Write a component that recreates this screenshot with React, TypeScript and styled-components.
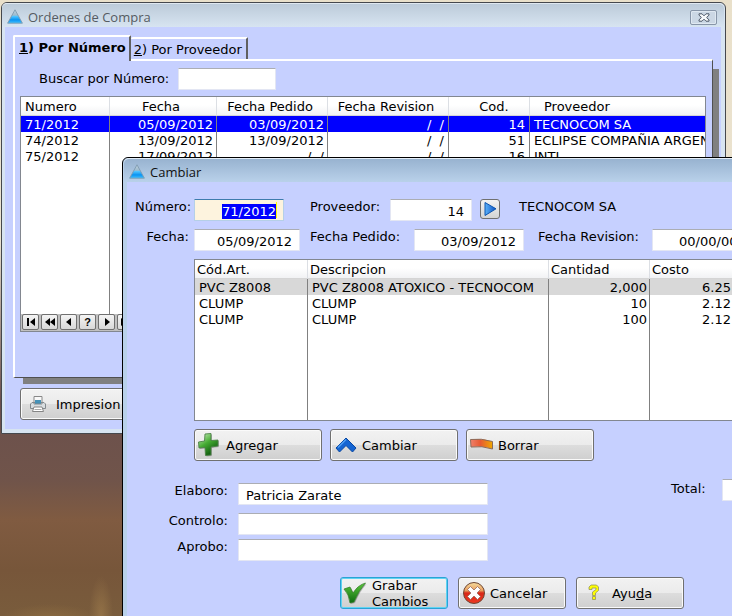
import React, { useEffect, useRef } from "react";
import styled, { createGlobalStyle, css } from "styled-components";

const GlobalStyle = createGlobalStyle`
  *, *::before, *::after { box-sizing: border-box; }
  body {
    margin: 0;
    color: #000;
    font-family: "DejaVu Sans", Verdana, sans-serif;
    font-size: 13px;
    line-height: 16px;
  }
  input, button { font: inherit; color: inherit; }
`;

const Desktop = styled.div`
  position: relative;
  min-height: 100vh;
  overflow: hidden;
  background:
    radial-gradient(ellipse 12px 40px at 101px 616px, #a8845088, transparent),
    radial-gradient(ellipse 50px 16px at 50px 620px, #a07c4477, transparent),
    linear-gradient(#e9e0ca 0, #ebe3d0 240px, #6b504d 400px, #70544a 480px, #805b41 520px, #77563a 570px, #795c3c 616px);
`;

const Window = styled.section<{ $active?: boolean }>`
  position: absolute;
  display: flex;
  flex-direction: column;
  border: 1px solid ${(p) => (p.$active ? "#000" : "#45484d")};
  border-radius: 6px 6px 0 0;
  background: ${(p) => (p.$active ? "#b9d1ea" : "#d7e4f1")};
`;

const OrdersWindow = styled(Window)`
  left: 1px;
  right: 6px;
  top: 2px;
  padding: 0 4px 4px 3px;
`;

const EditWindow = styled(Window)`
  left: 122px;
  right: -60px;
  top: 157px;
  min-height: calc(100vh - 150px);
  padding: 0 4px 4px;
`;

const TitleBar = styled.header<{ $active?: boolean }>`
  display: flex;
  align-items: center;
  gap: 5px;
  height: 24px;
  margin: 0 -3px;
  padding: 3px 7px 0 5px;
  border-top: 1px solid ${(p) => (p.$active ? "#e4eef8" : "#dfe8f0")};
  border-radius: 5px 5px 0 0;
  background: ${(p) =>
    p.$active
      ? "linear-gradient(#98b3d0, #b9d1ea)"
      : "linear-gradient(#bccbd9, #d7e4f1)"};
`;

const Title = styled.h1<{ $active?: boolean }>`
  flex: 1;
  margin: 0;
  font: 400 13px/18px "Open Sans", "Segoe UI", sans-serif;
  color: ${(p) => (p.$active ? "#111" : "#555b62")};
`;

const CloseButton = styled.button`
  display: flex;
  align-items: center;
  justify-content: center;
  width: 27px;
  height: 15px;
  padding: 0;
  border: 1px solid #8795a8;
  border-radius: 2px;
  background: #cbd7e4;
  box-shadow: inset 0 0 0 1px #dfe8f1;
`;

const Client = styled.div`
  flex: 1;
  background: #c6d0ff;
`;

const OrdersClient = styled(Client)`
  padding: 8px 8px 9px;
`;

const EditClient = styled(Client)`
  padding: 17px 0 8px 8px;
`;

const Tabs = styled.div`
  display: flex;
  align-items: flex-end;
`;

const Tab = styled.button<{ $selected?: boolean }>`
  height: 22px;
  padding: 1px 4px 0 3px;
  border: solid #fff;
  border-width: 2px 2px 0 0;
  border-right-color: #606060;
  border-radius: 2px 1px 0 0;
  background: #c6d0ff;
  white-space: nowrap;
  ${(p) =>
    p.$selected &&
    css`
      position: relative;
      z-index: 1;
      height: 26px;
      margin-bottom: -2px;
      padding: 0 3px 2px 4px;
      border-left: 2px solid #fff;
      font-weight: 700;
    `}
`;

const TabPanel = styled.div`
  height: 319px;
  padding: 7px 6px 0 5px;
  border: solid #fff;
  border-width: 2px 1px 1px 2px;
  border-right-color: #505050;
  border-bottom-color: #505050;
  box-shadow: 8px 8px 0 -2px #808080;
`;

const SearchRow = styled.div`
  display: flex;
  align-items: center;
  gap: 9px;
  margin-bottom: 6px;
  padding-left: 19px;
`;

const TextBox = styled.input<{ $w: number; $right?: boolean }>`
  width: ${(p) => p.$w}px;
  height: 22px;
  padding: 2px 7px 0;
  border: 1px solid #e3e6f3;
  border-top-color: #abadb3;
  border-radius: 1px;
  outline: 0;
  background: #fff;
  text-align: ${(p) => (p.$right ? "right" : "left")};
`;

const FocusedBox = styled(TextBox)`
  border-color: #b5cfe7;
  border-top-color: #3d7bad;
  background: linear-gradient(#ff0, #ff0) right 6px center / 1px 16px no-repeat #fdf3de;
  &::selection { background: #00f; color: #fff; }
`;

const GridFrame = styled.div`
  overflow: hidden;
  border: 1px solid #828790;
  background: #fff;
`;

const EditGrid = styled(GridFrame)`
  height: 162px;
  margin: 0 0 8px 59px;
`;

const DataTable = styled.table<{ $height: number }>`
  width: 100%;
  height: ${(p) => p.$height}px;
  table-layout: fixed;
  border-collapse: separate;
  border-spacing: 0;
`;

const Col = styled.col<{ $w?: number }>`
  width: ${(p) => (p.$w ? `${p.$w}px` : "auto")};
`;

const HeadCell = styled.th<{ $align?: string; $inset?: number }>`
  height: 19px;
  padding: 1px ${(p) => (p.$align ? 4 : 0)}px 0 ${(p) => p.$inset ?? 0}px;
  border-right: 1px solid #dcdfe4;
  border-bottom: 1px solid #d5d5d5;
  background: linear-gradient(#fff 45%, #f1f2f4);
  font-weight: 400;
  text-align: ${(p) => p.$align ?? "left"};
  white-space: nowrap;
  &:last-child { border-right: 0; }
`;

const Cell = styled.td<{ $right?: boolean }>`
  height: 16px;
  padding: 2px 2px 0 4px;
  border-right: 1px solid #808080;
  overflow: hidden;
  text-align: ${(p) => (p.$right ? "right" : "left")};
  white-space: pre;
  line-height: 14px;
  &:last-child { border-right: 0; }
`;

const Row = styled.tr<{ $tone?: "blue" | "gray" }>`
  ${(p) => p.$tone === "blue" && "background: #00f; color: #fff;"}
  ${(p) => p.$tone === "gray" && "background: #d8d8d8;"}
`;

const FillerCell = styled(Cell)`
  height: auto;
`;

const Navigator = styled.div`
  display: flex;
  gap: 2px;
  height: 17px;
  padding: 0 1px;
  background: #c0c0c0;
`;

const NavButton = styled.button`
  display: flex;
  align-items: center;
  justify-content: center;
  width: 17px;
  height: 16px;
  padding: 0;
  border: 1px solid #707070;
  border-radius: 2px;
  background: linear-gradient(#f4f4f4, #d8d8d8);
  font: 700 11px/12px "Liberation Sans", Arial, sans-serif;
`;

const PushButton = styled.button<{ $w: number; $default?: boolean; $gap?: number; $inset?: number }>`
  display: flex;
  align-items: center;
  gap: ${(p) => p.$gap ?? 5}px;
  width: ${(p) => p.$w}px;
  height: 32px;
  padding: 0 0 0 ${(p) => p.$inset ?? 2}px;
  border: 1px solid ${(p) => (p.$default ? "#2ba3d4" : "#707070")};
  border-radius: 3px;
  background: linear-gradient(#f2f2f2, #ebebeb 49%, #dddddd 50%, #cfcfcf);
  box-shadow: inset 0 0 0 1px ${(p) => (p.$default ? "#5fd3f3" : "#fafafa")};
  text-align: left;
  line-height: 16px;
  svg { flex: none; }
`;

const Caption = styled.span`
  padding-top: 1px;
`;

const PrintArea = styled.div`
  margin-top: 10px;
  padding-left: 7px;
`;

const FieldRow = styled.div`
  display: flex;
  align-items: flex-start;
  height: 30px;
`;

const Label = styled.label<{ $w?: number; $gap?: number; $right?: boolean }>`
  flex: none;
  width: ${(p) => (p.$w ? `${p.$w}px` : "auto")};
  margin-right: ${(p) => p.$gap ?? 0}px;
  text-align: ${(p) => (p.$right ? "right" : "left")};
  white-space: nowrap;
`;

const Field = styled.div<{ $gap?: number }>`
  display: flex;
  flex: none;
  margin-right: ${(p) => p.$gap ?? 0}px;
`;

const LookupButton = styled.button`
  display: flex;
  align-items: center;
  justify-content: center;
  width: 20px;
  height: 20px;
  margin: 0 19px 0 8px;
  padding: 0;
  border: 1px solid #707070;
  border-radius: 3px;
  background: linear-gradient(#f2f2f2, #d4d4d4);
`;

const ButtonRow = styled.div<{ $gap: number; $inset: number }>`
  display: flex;
  gap: ${(p) => p.$gap}px;
  padding-left: ${(p) => p.$inset}px;
`;

const SignArea = styled.div`
  display: flex;
  align-items: flex-start;
  margin: 18px 0 12px;
`;

const Signatures = styled.div`
  display: grid;
  grid-template-columns: 93px 250px;
  grid-template-rows: 30px 26px 26px;
  column-gap: 10px;
  padding-top: 4px;
  margin-right: 183px;
`;

const TotalLabel = styled(Label)`
  padding-top: 2px;
`;

const LogoIcon = () => (
  <svg width="16" height="16" viewBox="0 0 16 16">
    <defs>
      <linearGradient id="logo" x1="0" y1="0" x2="0" y2="1">
        <stop offset="0" stopColor="#c3d2dd" />
        <stop offset=".4" stopColor="#9fbccf" />
        <stop offset=".5" stopColor="#4cc2ff" />
        <stop offset=".75" stopColor="#0a93f2" />
        <stop offset="1" stopColor="#3fc0ff" />
      </linearGradient>
    </defs>
    <path d="M8 .8 L15.400 14.200 H.6 Z" fill="url(#logo)" stroke="#7f9bb0" strokeWidth=".9" strokeLinejoin="round" />
  </svg>
);

const CloseIcon = () => (
  <svg width="12" height="9" viewBox="0 0 12 9">
    <path d="M1 .8h3l2 2 2-2h3v1.400L8.600 4.500 11 6.800v1.400H8l-2-2-2 2H1V6.800l2.400-2.300L1 2.200z" fill="#f6f8fa" stroke="#4c5768" />
  </svg>
);

const PrinterIcon = () => (
  <svg width="18" height="18" viewBox="0 0 18 18">
    <path d="M5 1.500h8v6H5z" fill="#f8f8f8" stroke="#888" />
    <path d="M6 5h6v4H6z" fill="#4592b8" />
    <path d="M3 7.500 1.500 9v4.500h15V9L15 7.500h-2V9H5V7.500z" fill="#d8dde0" stroke="#83898d" />
    <path d="M5 12h8l1.500 4.500h-11z" fill="#fff" stroke="#858585" />
    <path d="M5.500 14.500h7" stroke="#aaa" />
  </svg>
);

const PlusIcon = () => (
  <svg width="24" height="26" viewBox="0 0 24 26">
    <defs>
      <linearGradient id="plus" x1="0" y1="0" x2=".6" y2="1">
        <stop offset="0" stopColor="#d8f7c8" />
        <stop offset=".5" stopColor="#46ac34" />
        <stop offset="1" stopColor="#0c560c" />
      </linearGradient>
    </defs>
    <path d="M9 3l6-.5 0 7 7-.5v6l-7 1 0 8-5.500.500-.5-8-6 .5-.5-6 6-1z" fill="#777" opacity=".5" />
    <path d="M8 2l6-.5 0 7 7-.5v6l-7 1 0 8-5.500.500-.5-8-6 .5-.5-6 6-1z" fill="url(#plus)" stroke="#4c8047" strokeWidth=".9" />
  </svg>
);

const ChevronIcon = () => (
  <svg width="24" height="18" viewBox="0 0 24 18">
    <path d="M12 2 22 12l-3.500 4-6.500-6.500L5.500 16 2 12z" fill="#1464d2" stroke="#0a47a0" strokeLinejoin="round" />
    <path d="M12 3.500 4 11.500" stroke="#4fa1f6" strokeWidth="1.500" />
  </svg>
);

const MinusIcon = () => (
  <svg width="25" height="14" viewBox="0 0 25 14">
    <defs>
      <linearGradient id="minus">
        <stop offset="0" stopColor="#ef806b" />
        <stop offset=".45" stopColor="#e75a32" />
        <stop offset="1" stopColor="#f0a800" />
      </linearGradient>
    </defs>
    <path d="M1.500 1.500Q12 0 23.500 3.500V11Q13 7.500 2 9z" fill="url(#minus)" stroke="#8c6a58" />
  </svg>
);

const CheckIcon = () => (
  <svg width="24" height="26" viewBox="0 0 24 26">
    <defs>
      <linearGradient id="check" x1="0" y1="0" x2="0" y2="1">
        <stop offset="0" stopColor="#5cc83c" />
        <stop offset="1" stopColor="#0e6a10" />
      </linearGradient>
    </defs>
    <path d="M2 10l6-2 3 6Q16 6 23.500 4 17 11 12 23l-4 1Q7 15 2 10z" fill="#666" opacity=".45" />
    <path d="M1 9l6-2 3 6Q15 5 22.500 3 16 10 11 22l-4 1Q6 14 1 9z" fill="url(#check)" stroke="#2e7a22" strokeWidth=".7" />
  </svg>
);

const CancelIcon = () => (
  <svg width="24" height="24" viewBox="0 0 24 24">
    <defs>
      <linearGradient id="cancel" x1="0" y1="0" x2="0" y2="1">
        <stop offset="0" stopColor="#f6dda0" />
        <stop offset=".38" stopColor="#e9a060" />
        <stop offset=".5" stopColor="#d82718" />
        <stop offset="1" stopColor="#ee3a22" />
      </linearGradient>
    </defs>
    <circle cx="12" cy="12" r="10.500" fill="url(#cancel)" stroke="#6e4634" />
    <path d="M8.500 5.500 12 9l3.500-3.500 3 3L15 12l3.500 3.500-3 3L12 15l-3.500 3.500-3-3L9 12 5.500 8.500z" fill="#fff" stroke="#996a60" strokeWidth=".8" />
  </svg>
);

const HelpIcon = () => (
  <svg width="12" height="18" viewBox="0 0 12 18">
    <path d="M1 5.500V3L3 1h5.500l2 2v3.500L7.500 9v2.500h-3V8L8 5.500V4H4v1.500zM4.500 12.500h3v3h-3z" fill="#ff0" stroke="#96965a" strokeWidth=".8" />
  </svg>
);

const PlayIcon = () => (
  <svg width="16" height="16" viewBox="0 0 16 16">
    <defs>
      <linearGradient id="play">
        <stop offset="0" stopColor="#5cb3fa" />
        <stop offset="1" stopColor="#0a51c4" />
      </linearGradient>
    </defs>
    <path d="M3 1.500 14 7.800 3 14.500z" fill="url(#play)" stroke="#0d55ae" strokeLinejoin="round" />
  </svg>
);

const navShapes: Record<string, string> = {
  Primero: "M1 1h2v8H1zM9 1v8L4 5z",
  "Página anterior": "M5 1v8L0 5zM10 1v8L5 5z",
  Anterior: "M7 1v8L2 5z",
  Buscar: "",
  Siguiente: "M3 1v8l5-4z",
  "Página siguiente": "M0 1v8l5-4zM5 1v8l5-4z",
  Último: "M1 1v8l5-4zM7 1h2v8H7z",
};

const orders = [
  ["71/2012", "05/09/2012", "03/09/2012", "/  /", "14", "TECNOCOM SA"],
  ["74/2012", "13/09/2012", "13/09/2012", "/  /", "51", "ECLIPSE COMPAÑIA ARGENTINA"],
  ["75/2012", "17/09/2012", "/  /", "/  /", "16", "INTI"],
];

const items = [
  ["PVC Z8008", "PVC Z8008 ATOXICO - TECNOCOM", "2,000", "6.25"],
  ["CLUMP", "CLUMP", "10", "2.12"],
  ["CLUMP", "CLUMP", "100", "2.12"],
];

const DateCell = styled(Cell)<{ $blank?: boolean }>`
  padding-right: ${(p) => (p.$blank ? 4 : 3)}px;
`;

const CostCell = styled(Cell)`
  padding-right: 55px;
`;

function Orders() {
  return (
    <OrdersWindow>
      <TitleBar>
        <LogoIcon />
        <Title>Ordenes de Compra</Title>
        <CloseButton aria-label="Cerrar"><CloseIcon /></CloseButton>
      </TitleBar>
      <OrdersClient>
        <Tabs role="tablist">
          <Tab role="tab" aria-selected="true" $selected><u>1</u>) Por Número</Tab>
          <Tab role="tab" aria-selected="false"><u>2</u>) Por Proveedor</Tab>
        </Tabs>
        <TabPanel role="tabpanel">
          <SearchRow>
            <Label htmlFor="search">Buscar por Número:</Label>
            <TextBox id="search" $w={98} />
          </SearchRow>
          <GridFrame>
            <DataTable $height={217}>
              <colgroup>
                <Col $w={89} /><Col $w={107} /><Col $w={111} /><Col $w={121} /><Col $w={81} /><Col />
              </colgroup>
              <thead>
                <tr>
                  <HeadCell $inset={4}>Numero</HeadCell>
                  <HeadCell $align="center">Fecha</HeadCell>
                  <HeadCell $align="center">Fecha Pedido</HeadCell>
                  <HeadCell $align="center">Fecha Revision</HeadCell>
                  <HeadCell $align="center" $inset={14}>Cod.</HeadCell>
                  <HeadCell $inset={14}>Proveedor</HeadCell>
                </tr>
              </thead>
              <tbody>
                {orders.map((r, i) => (
                  <Row key={r[0]} $tone={i === 0 ? "blue" : undefined}>
                    <Cell>{r[0]}</Cell>
                    <DateCell $right>{r[1]}</DateCell>
                    <DateCell $right>{r[2]}</DateCell>
                    <DateCell $right $blank>{r[3]}</DateCell>
                    <DateCell $right $blank>{r[4]}</DateCell>
                    <Cell>{r[5]}</Cell>
                  </Row>
                ))}
                <tr>{orders[0].map((_, i) => <FillerCell key={i} />)}</tr>
              </tbody>
            </DataTable>
            <Navigator>
              {Object.entries(navShapes).map(([name, d]) => (
                <NavButton key={name} aria-label={name}>
                  {d ? <svg width="10" height="10" viewBox="0 0 10 10"><path d={d} /></svg> : "?"}
                </NavButton>
              ))}
            </Navigator>
          </GridFrame>
        </TabPanel>
        <PrintArea>
          <PushButton $w={128} $inset={8} $gap={9}><PrinterIcon /><Caption>Impresion</Caption></PushButton>
        </PrintArea>
      </OrdersClient>
    </OrdersWindow>
  );
}

function EditOrder() {
  const numberRef = useRef<HTMLInputElement>(null);
  useEffect(() => {
    numberRef.current?.focus({ preventScroll: true });
    numberRef.current?.select();
  }, []);
  return (
    <EditWindow $active>
      <TitleBar $active>
        <LogoIcon />
        <Title $active>Cambiar</Title>
      </TitleBar>
      <EditClient>
        <FieldRow>
          <Label htmlFor="num" $w={54} $gap={5} $right>Número:</Label>
          <Field $gap={26}><FocusedBox ref={numberRef} id="num" $w={90} $right defaultValue="71/2012" /></Field>
          <Label htmlFor="prov" $w={73} $gap={7}>Proveedor:</Label>
          <Field><TextBox id="prov" $w={82} $right defaultValue="14" /></Field>
          <LookupButton aria-label="Buscar proveedor"><PlayIcon /></LookupButton>
          <span>TECNOCOM SA</span>
        </FieldRow>
        <FieldRow>
          <Label htmlFor="date" $w={54} $gap={5} $right>Fecha:</Label>
          <Field $gap={10}><TextBox id="date" $w={106} $right defaultValue="05/09/2012" /></Field>
          <Label htmlFor="ordered" $w={95} $gap={9}>Fecha Pedido:</Label>
          <Field $gap={14}><TextBox id="ordered" $w={110} $right defaultValue="03/09/2012" /></Field>
          <Label htmlFor="reviewed" $w={105} $gap={9}>Fecha Revision:</Label>
          <Field><TextBox id="reviewed" $w={110} $right defaultValue="00/00/0000" /></Field>
        </FieldRow>
        <EditGrid>
          <DataTable $height={160}>
            <colgroup><Col $w={113} /><Col $w={241} /><Col $w={101} /><Col /></colgroup>
            <thead>
              <tr>
                <HeadCell $inset={2}>Cód.Art.</HeadCell>
                <HeadCell $inset={2}>Descripcion</HeadCell>
                <HeadCell $inset={2}>Cantidad</HeadCell>
                <HeadCell $inset={2}>Costo</HeadCell>
              </tr>
            </thead>
            <tbody>
              {items.map((r, i) => (
                <Row key={i} $tone={i === 0 ? "gray" : undefined}>
                  <Cell>{r[0]}</Cell>
                  <Cell>{r[1]}</Cell>
                  <Cell $right>{r[2]}</Cell>
                  <CostCell $right>{r[3]}</CostCell>
                </Row>
              ))}
              <tr>{items[0].map((_, i) => <FillerCell key={i} />)}</tr>
            </tbody>
          </DataTable>
        </EditGrid>
        <ButtonRow $gap={8} $inset={59}>
          <PushButton $w={128}><PlusIcon /><Caption>Agregar</Caption></PushButton>
          <PushButton $w={128} $inset={3} $gap={4}><ChevronIcon /><Caption>Cambiar</Caption></PushButton>
          <PushButton $w={128} $inset={2} $gap={4}><MinusIcon /><Caption>Borrar</Caption></PushButton>
        </ButtonRow>
        <SignArea>
          <Signatures>
            <Label htmlFor="made" $right>Elaboro:</Label>
            <TextBox id="made" $w={250} defaultValue="Patricia Zarate" />
            <Label htmlFor="checked" $right>Controlo:</Label>
            <TextBox id="checked" $w={250} />
            <Label htmlFor="approved" $right>Aprobo:</Label>
            <TextBox id="approved" $w={250} />
          </Signatures>
          <TotalLabel htmlFor="total" $w={40} $gap={11}>Total:</TotalLabel>
          <TextBox id="total" $w={70} $right />
        </SignArea>
        <ButtonRow $gap={10} $inset={205}>
          <PushButton $w={108} $default><CheckIcon /><Caption>Grabar<br />Cambios</Caption></PushButton>
          <PushButton $w={108} $inset={3} $gap={4}><CancelIcon /><Caption>Cancelar</Caption></PushButton>
          <PushButton $w={108} $inset={11} $gap={12}><HelpIcon /><Caption>Ayu<u>d</u>a</Caption></PushButton>
        </ButtonRow>
      </EditClient>
    </EditWindow>
  );
}

export default function App() {
  return (
    <>
      <GlobalStyle />
      <Desktop>
        <Orders />
        <EditOrder />
      </Desktop>
    </>
  );
}
